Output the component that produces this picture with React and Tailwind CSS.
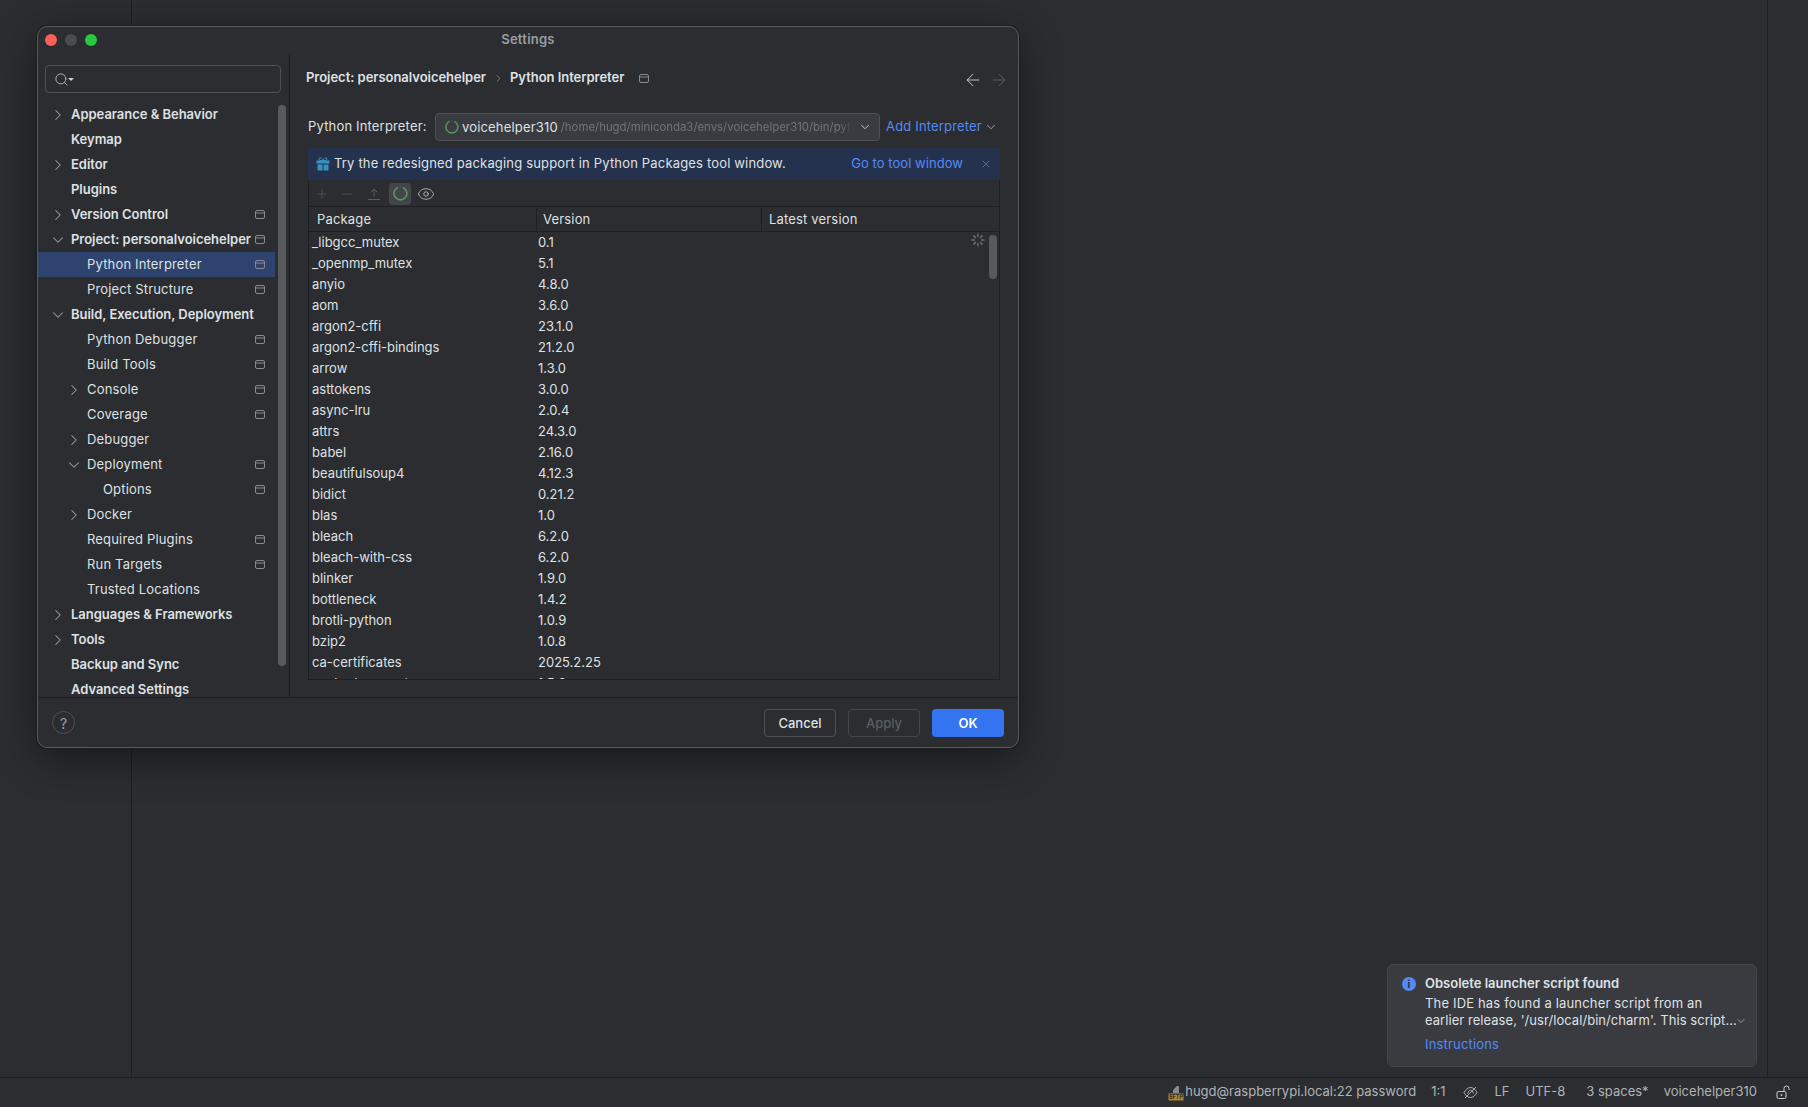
import { ArrowLeft, ArrowRight, ChevronDown, ChevronRight, Eye, Minus, Plus, Search, X } from "lucide-react";

const tree = [
  { label: "Appearance & Behavior", depth: 0, arrow: "right", bold: true },
  { label: "Keymap", depth: 0, bold: true },
  { label: "Editor", depth: 0, arrow: "right", bold: true },
  { label: "Plugins", depth: 0, bold: true },
  { label: "Version Control", depth: 0, arrow: "right", bold: true, scoped: true },
  { label: "Project: personalvoicehelper", depth: 0, arrow: "down", bold: true, scoped: true },
  { label: "Python Interpreter", depth: 1, scoped: true, selected: true },
  { label: "Project Structure", depth: 1, scoped: true },
  { label: "Build, Execution, Deployment", depth: 0, arrow: "down", bold: true },
  { label: "Python Debugger", depth: 1, scoped: true },
  { label: "Build Tools", depth: 1, scoped: true },
  { label: "Console", depth: 1, arrow: "right", scoped: true },
  { label: "Coverage", depth: 1, scoped: true },
  { label: "Debugger", depth: 1, arrow: "right" },
  { label: "Deployment", depth: 1, arrow: "down", scoped: true },
  { label: "Options", depth: 2, scoped: true },
  { label: "Docker", depth: 1, arrow: "right" },
  { label: "Required Plugins", depth: 1, scoped: true },
  { label: "Run Targets", depth: 1, scoped: true },
  { label: "Trusted Locations", depth: 1 },
  { label: "Languages & Frameworks", depth: 0, arrow: "right", bold: true },
  { label: "Tools", depth: 0, arrow: "right", bold: true },
  { label: "Backup and Sync", depth: 0, bold: true },
  { label: "Advanced Settings", depth: 0, bold: true },
];

const packages = [
  ["_libgcc_mutex", "0.1"],
  ["_openmp_mutex", "5.1"],
  ["anyio", "4.8.0"],
  ["aom", "3.6.0"],
  ["argon2-cffi", "23.1.0"],
  ["argon2-cffi-bindings", "21.2.0"],
  ["arrow", "1.3.0"],
  ["asttokens", "3.0.0"],
  ["async-lru", "2.0.4"],
  ["attrs", "24.3.0"],
  ["babel", "2.16.0"],
  ["beautifulsoup4", "4.12.3"],
  ["bidict", "0.21.2"],
  ["blas", "1.0"],
  ["bleach", "6.2.0"],
  ["bleach-with-css", "6.2.0"],
  ["blinker", "1.9.0"],
  ["bottleneck", "1.4.2"],
  ["brotli-python", "1.0.9"],
  ["bzip2", "1.0.8"],
  ["ca-certificates", "2025.2.25"],
  ["cached-property", "1.5.2"],
];

const depthClass = ["pl-[11px]", "pl-[27px]", "pl-[43px]"];
const boldClass = "font-semibold tracking-[-0.03px]";

const ScopeIcon = ({ className = "" }) => (
  <svg width="10" height="9" viewBox="0 0 10 9" fill="none" stroke="#868a91" strokeWidth="1" className={className}>
    <rect x="0.5" y="0.5" width="9" height="8" rx="1.5" />
    <path d="M0.5 3h9" />
  </svg>
);

const Ring = ({ size = 14 }) => (
  <svg width={size} height={size} viewBox="0 0 14 14" fill="none" stroke="#57965c" strokeWidth="1.5">
    <path d="M9.2 1.4a6 6 0 1 1-4.6 0" />
    <path d="M6.2 1.05l.9-.05" stroke="#3d6b42" />
  </svg>
);

const TreeRow = ({ item }) => (
  <div
    className={`flex h-[25px] shrink-0 items-center ${depthClass[item.depth]} ${
      item.selected ? "bg-[#2e436e]" : ""
    }`}
  >
    <span className="flex w-[22px] shrink-0 items-center">
      {item.arrow === "right" && <ChevronRight size={18} strokeWidth={1.4} className="text-[#9da0a8]" />}
      {item.arrow === "down" && <ChevronDown size={18} strokeWidth={1.4} className="text-[#9da0a8]" />}
    </span>
    <span className={`whitespace-nowrap ${item.bold ? boldClass : ""}`}>{item.label}</span>
    {item.scoped && <ScopeIcon className="ml-auto mr-[10px] shrink-0" />}
  </div>
);

const Sidebar = () => (
  <div className="flex w-[252px] shrink-0 flex-col overflow-hidden border-r border-[#1e1f22] pt-[11px]">
    <div className="ml-[7px] mr-[8px] flex h-[28px] shrink-0 items-center rounded-[4px] border border-[#4e5157] pl-[8px]">
      <Search size={15} strokeWidth={1.25} className="text-[#ced0d6]" />
      <span className="ml-[-1px] mt-[1px] h-0 w-0 border-x-[3px] border-t-[3px] border-x-transparent border-t-[#ced0d6]" />
    </div>
    <div className="mt-[9px] flex">
      <div className="flex w-[237px] shrink-0 flex-col">
        {tree.map((item) => (
          <TreeRow key={item.label} item={item} />
        ))}
      </div>
      <div className="ml-[3px] mt-[3px] h-[561px] w-[8px] shrink-0 rounded-full bg-[#58595c]" />
    </div>
  </div>
);

const InterpreterRow = () => (
  <div className="ml-[2px] mr-[18px] mt-[26px] flex h-[28px] items-center">
    <span className="w-[127px] shrink-0 whitespace-nowrap">Python Interpreter:</span>
    <div className="flex h-full w-[445px] shrink-0 items-center rounded-[4px] border border-[#4e5157] bg-[#393b40] pl-[9px]">
      <Ring size={14} />
      <span className="ml-[3px] whitespace-nowrap pt-[1px]">voicehelper310</span>
      <span className="ml-[3px] w-[291px] overflow-hidden whitespace-nowrap pt-[1px] text-[11.4px] tracking-[0px] text-[#6f737a] [mask-image:linear-gradient(to_right,black_96%,transparent)]">
        /home/hugd/miniconda3/envs/voicehelper310/bin/python
      </span>
      <ChevronDown size={14} strokeWidth={1.5} className="ml-auto mr-[7px] text-[#ced0d6]" />
    </div>
    <span className="ml-[6px] whitespace-nowrap text-[#548af7]">Add Interpreter</span>
    <ChevronDown size={14} strokeWidth={1.25} className="ml-[2px] text-[#ced0d6]" />
  </div>
);

const GiftIcon = () => (
  <svg width="14" height="14" viewBox="0 0 14 14" fill="#3592c4">
    <rect x="0.5" y="3.5" width="13" height="3" />
    <rect x="1.5" y="7.5" width="5" height="6" />
    <rect x="7.5" y="7.5" width="5" height="6" />
    <path d="M7 3.5 4 3.4C2.6 3.2 2.6.7 4.2.8 5.5.9 6.6 2 7 3.5Zm0 0 3-.1c1.4-.2 1.4-2.7-.2-2.6C8.5.9 7.4 2 7 3.5Z" fill="none" stroke="#3592c4" />
  </svg>
);

const Banner = () => (
  <div className="ml-[2px] mr-[18px] mt-[7px] flex h-[32px] shrink-0 items-center bg-[#25324d] pl-[8px]">
    <GiftIcon />
    <span className="ml-[4px] whitespace-nowrap">Try the redesigned packaging support in Python Packages tool window.</span>
    <span className="ml-auto whitespace-nowrap tracking-[0.05px] text-[#548af7]">Go to tool window</span>
    <X size={12} strokeWidth={1.25} className="ml-[17px] mr-[8px] text-[#868a91]" />
  </div>
);

const Toolbar = () => (
  <div className="flex h-[27px] shrink-0 items-center border-b border-[#1e1f22] pl-[4px] pt-[1px]">
    <Plus size={16} strokeWidth={1} className="ml-[1px] text-[#5a5d63]" />
    <Minus size={16} strokeWidth={1} className="ml-[9px] text-[#5a5d63]" />
    <svg width="14" height="14" viewBox="0 0 14 14" fill="none" stroke="#5a5d63" className="ml-[12px]">
      <path d="M7 10V2M3.5 5.5 7 2l3.5 3.5M1 12.5h12" />
    </svg>
    <span className="ml-[8px] flex h-[22px] w-[22px] items-center justify-center rounded-[4px] bg-[#43454a]">
      <Ring size={15} />
    </span>
    <Eye size={18} strokeWidth={1} className="ml-[6px] text-[#ced0d6]" />
  </div>
);

const Spinner = () => (
  <svg width="14" height="14" viewBox="0 0 14 14" stroke="#6f737a" strokeWidth="1.3" strokeLinecap="round" className="absolute left-[662px] top-[53px]">
    <path d="M7 1v2.5M7 10.5V13M1 7h2.5M10.5 7H13M2.8 2.8l1.7 1.7M9.5 9.5l1.7 1.7M2.8 11.2l1.7-1.7M9.5 4.5l1.7-1.7" />
  </svg>
);

const PackageTable = () => (
  <div className="relative ml-[2px] mr-[18px] flex h-[500px] flex-col overflow-hidden border-x border-b border-[#1e1f22]">
    <Toolbar />
    <div className="flex h-[25px] shrink-0 items-center border-b border-[#1e1f22] pt-[1px]">
      <span className="w-[227px] shrink-0 pl-[8px]">Package</span>
      <span className="flex h-full w-[226px] shrink-0 items-center border-x border-[#1e1f22] pl-[6px]">Version</span>
      <span className="pl-[7px]">Latest version</span>
    </div>
    <div className="flex flex-col tracking-[0px]">
      {packages.map(([name, version]) => (
        <div key={name} className="flex h-[21px] shrink-0 items-center">
          <span className="w-[229px] shrink-0 pl-[3px]">{name}</span>
          <span>{version}</span>
        </div>
      ))}
    </div>
    <Spinner />
    <div className="absolute left-[680px] top-[55px] h-[44px] w-[8px] rounded-full bg-[#58595c]" />
  </div>
);

const ContentPane = () => (
  <div className="flex min-w-0 flex-1 flex-col overflow-hidden pl-[16px]">
    <div className="mt-[15px] flex h-[18px] items-center">
      <span className={boldClass}>Project: personalvoicehelper</span>
      <ChevronRight size={11} strokeWidth={1.5} className="ml-[7px] mr-[6px] text-[#9da0a8]" />
      <span className={boldClass}>Python Interpreter</span>
      <ScopeIcon className="ml-[15px]" />
      <ArrowLeft size={20} strokeWidth={1.1} className="ml-auto mt-[3px] text-[#ced0d6]" />
      <ArrowRight size={20} strokeWidth={1.1} className="ml-[6px] mr-[9px] mt-[3px] text-[#5a5d63]" />
    </div>
    <InterpreterRow />
    <Banner />
    <PackageTable />
  </div>
);

const Footer = () => (
  <div className="flex h-[50px] shrink-0 items-center border-t border-[#1e1f22] pl-[14px] pr-[14px] tracking-[0px]">
    <span className="flex h-[23px] w-[23px] items-center justify-center rounded-full border border-[#4e5157] pt-[1px] text-[14px] text-[#9da0a8]">
      ?
    </span>
    <button className="ml-auto h-[28px] w-[72px] rounded-[4px] border border-[#4e5157] pt-[2px] font-medium">Cancel</button>
    <button className="ml-[12px] h-[28px] w-[72px] rounded-[4px] border border-[#43454a] pt-[2px] font-medium text-[#5a5d63]">Apply</button>
    <button className="ml-[12px] h-[28px] w-[72px] rounded-[4px] bg-[#3574f0] pt-[2px] font-semibold text-white">OK</button>
  </div>
);

const SettingsDialog = () => (
  <div className="absolute left-[37px] top-[26px] flex h-[722px] w-[982px] flex-col overflow-hidden rounded-[10px] border border-[#5a5c60] bg-[#2b2d30] shadow-[0_0_0_1px_#1a1b1d,0_10px_40px_rgba(0,0,0,0.45)]">
    <div className="relative flex h-[27px] shrink-0 items-center justify-center pb-[2px]">
      <div className="absolute left-[7px] top-[7px] flex gap-[8px]">
        <span className="h-[12px] w-[12px] rounded-full bg-[#ff5f57]" />
        <span className="h-[12px] w-[12px] rounded-full bg-[#4b4c4f]" />
        <span className="h-[12px] w-[12px] rounded-full bg-[#28c840]" />
      </div>
      <span className="font-semibold tracking-[0.25px] text-[#9a9da3]">Settings</span>
    </div>
    <div className="flex min-h-0 flex-1">
      <Sidebar />
      <ContentPane />
    </div>
    <Footer />
  </div>
);

const Notification = () => (
  <div className="absolute left-[1387px] top-[964px] h-[103px] w-[370px] rounded-[6px] border border-[#43454a] bg-[#393b40] pl-[14px] pt-[9px]">
    <div className="flex h-[20px] items-center">
      <span className="flex h-[14px] w-[14px] items-center justify-center rounded-full bg-[#548af7] text-[10px] font-bold text-[#2b2d30]">
        i
      </span>
      <span className="ml-[9px] font-semibold tracking-[0px]">Obsolete launcher script found</span>
    </div>
    <div className="ml-[23px] mt-[1px] leading-[17px]">
      <div>The IDE has found a launcher script from an</div>
      <div className="flex items-center">
        <span className="tracking-[0.05px]">earlier release, '/usr/local/bin/charm'. This script...</span>
        <ChevronDown size={12} strokeWidth={1.25} className="ml-[-2px] text-[#ced0d6]" />
      </div>
    </div>
    <div className="ml-[23px] mt-[6px] text-[#548af7]">Instructions</div>
  </div>
);

const StatusBar = () => (
  <div className="flex h-[30px] shrink-0 items-center justify-end border-t border-[#1e1f22] pb-[1px] pr-[18px] tracking-[0px] text-[#b0b3b8]">
    <svg width="16" height="17" viewBox="0 0 16 17" className="mr-[1px]">
      <path d="M5 9V6l4-4h2v7z" fill="#868a91" />
      <rect x="0.5" y="9.5" width="15" height="7" fill="#b5852c" />
      <text x="8" y="15.2" fontSize="5.5" fontWeight="700" textAnchor="middle" fill="#2b2d30" fontFamily="Inter">SFTP</text>
    </svg>
    <span className="whitespace-nowrap">hugd@raspberrypi.local:22 password</span>
    <span className="ml-[15px]">1:1</span>
    <svg width="15" height="15" viewBox="0 0 15 15" fill="none" stroke="#b0b3b8" className="ml-[17px]">
      <path d="M1 7.5C3 4 5 2.5 7.5 2.5S12 4 14 7.5C12 11 10 12.5 7.5 12.5S3 11 1 7.5Z" />
      <path d="M4.5 8.5c1-2.5 2-3.5 3-3.5s2 1 3 3.5M2 13 13 2" />
    </svg>
    <span className="ml-[17px]">LF</span>
    <span className="ml-[16px]">UTF-8</span>
    <span className="ml-[21px]">3 spaces*</span>
    <span className="ml-[15px]">voicehelper310</span>
    <svg width="14" height="14" viewBox="0 0 14 14" fill="none" stroke="#ced0d6" className="ml-[19px]">
      <rect x="1" y="6.5" width="9" height="7" rx="1.5" />
      <path d="M8 6.5V3.5a2.5 2.5 0 0 1 5 0V5" />
      <circle cx="5.5" cy="10" r="0.6" fill="#ced0d6" />
    </svg>
  </div>
);

export default function App() {
  return (
    <div className="relative flex h-screen w-full flex-col overflow-hidden bg-[#2b2d30] font-[family-name:Inter] text-[13px] tracking-[0.17px] text-[#dfe1e5]">
      <div className="flex min-h-0 flex-1">
        <div className="w-[132px] shrink-0 border-r border-[#1e1f22]" />
        <div className="flex-1" />
        <div className="w-[41px] shrink-0 border-l border-[#1e1f22]" />
      </div>
      <StatusBar />
      <SettingsDialog />
      <Notification />
    </div>
  );
}
